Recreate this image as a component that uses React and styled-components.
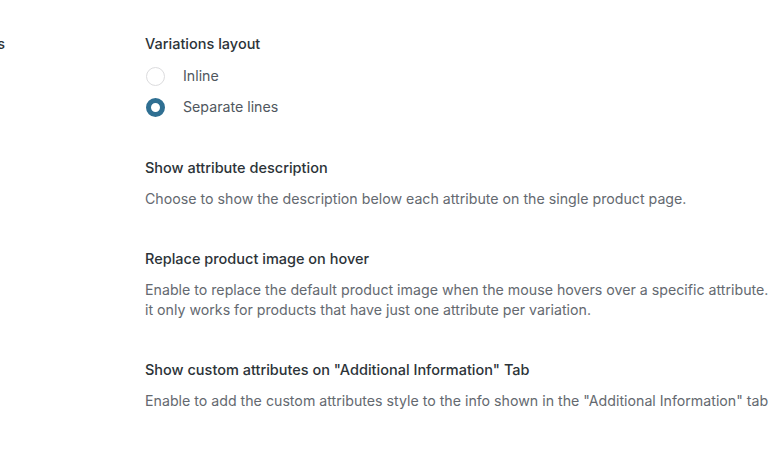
import React from 'react'
import styled, { createGlobalStyle } from 'styled-components'

const GlobalStyle = createGlobalStyle`
  html, body {
    margin: 0;
    padding: 0;
    background: #ffffff;
    overflow: hidden;
  }
  body {
    font-family: Inter, "Noto Sans", "Liberation Sans", sans-serif;
    -webkit-font-smoothing: antialiased;
  }
`

function Radio(props) {
  return (
    <RadioRow>
      <RadioCircle checked={props.checked} />
      <RadioLabel>{props.label}</RadioLabel>
    </RadioRow>
  )
}

function Setting(props) {
  return (
    <SettingBlock>
      <Title>{props.title}</Title>
      <Description>{props.children}</Description>
    </SettingBlock>
  )
}

export default function App() {
  return (
    <Page>
      <GlobalStyle />
      <Row>
        <Label>Attributes</Label>
        <Fields>
          <Group>
            <Title>Variations layout</Title>
            <RadioList>
              <Radio label="Inline" />
              <Radio label="Separate lines" checked />
            </RadioList>
          </Group>
          <Setting title="Show attribute description">
            Choose to show the description below each attribute on the single product page.
          </Setting>
          <Setting title="Replace product image on hover">
            Enable to replace the default product image when the mouse hovers over a specific attribute. Note that it only works for products that have just one attribute per variation.
          </Setting>
          <Setting title={'Show custom attributes on "Additional Information" Tab'}>
            Enable to add the custom attributes style to the info shown in the "Additional Information" tab.
          </Setting>
        </Fields>
      </Row>
    </Page>
  )
}

const Page = styled.div`
  width: 769px;
  height: 452px;
  overflow: hidden;
  padding-top: 34px;
  box-sizing: border-box;
`
const Row = styled.div`
  display: grid;
  grid-template-columns: 150px 1fr;
  margin-left: -5px;
  width: 900px;
`
const Label = styled.div`
  font-size: 14.4px;
  font-weight: 500;
  line-height: 20px;
  color: #2c3338;
  text-align: right;
  padding-right: 140px;
  white-space: nowrap;
  direction: rtl;
  overflow: hidden;
`
const Fields = styled.div`
  display: flex;
  flex-direction: column;
  gap: 40px;
  width: 696px;
`
const Group = styled.div`
  display: flex;
  flex-direction: column;
  padding-bottom: 1px;
`
const Title = styled.div`
  font-size: 14.5px;
  font-weight: 500;
  line-height: 20px;
  color: #2c3338;
`
const RadioList = styled.div`
  display: flex;
  flex-direction: column;
  gap: 11px;
  margin-top: 12px;
`
const RadioRow = styled.div`
  display: flex;
  align-items: center;
  gap: 18px;
  height: 20px;
`
const RadioCircle = styled.span`
  box-sizing: border-box;
  width: 19px;
  height: 19px;
  border-radius: 50%;
  margin-left: 1px;
  border: ${props => (props.checked ? '5px solid #2f6f92' : '1px solid #dcdcde')};
  background: #ffffff;
`
const RadioLabel = styled.span`
  font-size: 14.2px;
  line-height: 20px;
  color: #50575e;
`
const SettingBlock = styled.div`
  display: flex;
  flex-direction: column;
  gap: 11px;
`
const Description = styled.div`
  font-size: 14.2px;
  line-height: 20px;
  color: #646970;
`
